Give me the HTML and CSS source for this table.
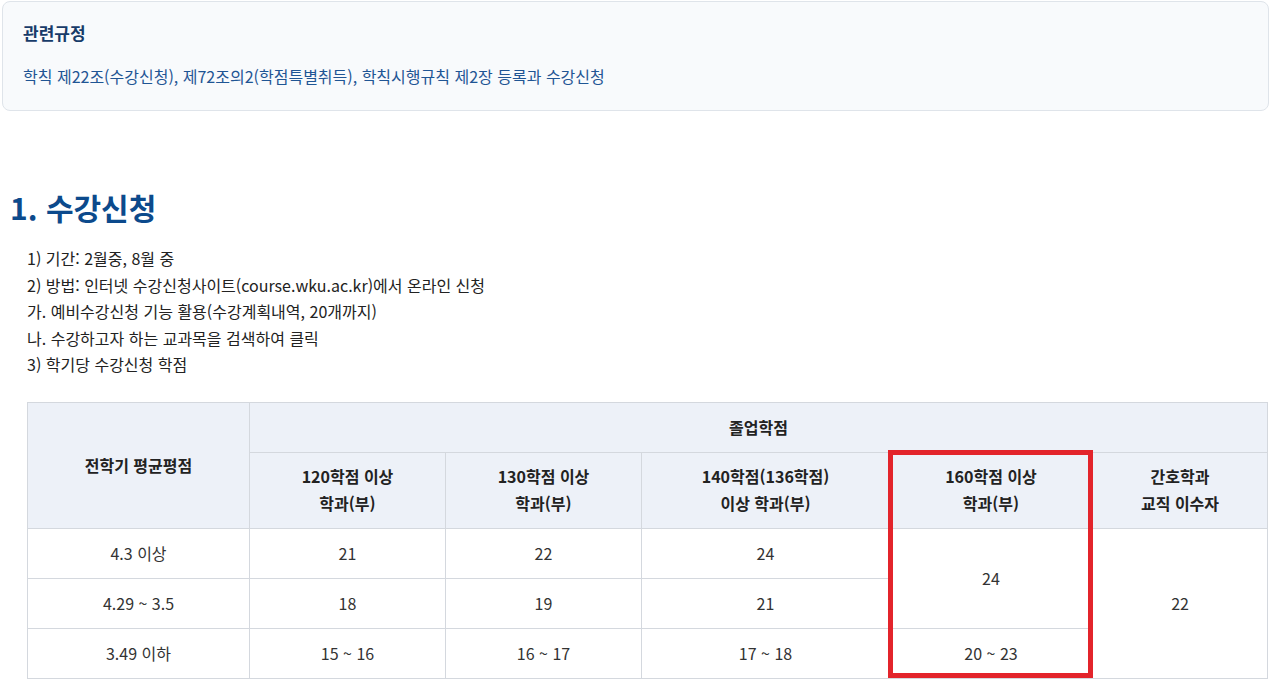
FILE: index.html
```html
<!DOCTYPE html>
<html lang="ko">
<head>
<meta charset="utf-8">
<title>수강신청</title>
<link rel="stylesheet" href="styles.css">
</head>
<body>
<div class="page">
  <section class="rule-box">
    <h3 class="rule-title">관련규정</h3>
    <p class="rule-text">학칙 제22조(수강신청), 제72조의2(학점특별취득), 학칙시행규칙 제2장 등록과 수강신청</p>
  </section>

  <h2 class="section-title">1. 수강신청</h2>

  <ul class="steps">
    <li>1) 기간: 2월중, 8월 중</li>
    <li>2) 방법: 인터넷 수강신청사이트(course.wku.ac.kr)에서 온라인 신청</li>
    <li>가. 예비수강신청 기능 활용(수강계획내역, 20개까지)</li>
    <li>나. 수강하고자 하는 교과목을 검색하여 클릭</li>
    <li>3) 학기당 수강신청 학점</li>
  </ul>

  <div class="table-wrap">
    <table class="credit-table">
      <colgroup>
        <col class="c1"><col class="c2"><col class="c3"><col class="c4"><col class="c5"><col class="c6">
      </colgroup>
      <thead>
        <tr class="h1">
          <th rowspan="2">전학기 평균평점</th>
          <th colspan="5">졸업학점</th>
        </tr>
        <tr class="h2">
          <th>120학점 이상<br>학과(부)</th>
          <th>130학점 이상<br>학과(부)</th>
          <th>140학점(136학점)<br>이상 학과(부)</th>
          <th>160학점 이상<br>학과(부)</th>
          <th>간호학과<br>교직 이수자</th>
        </tr>
      </thead>
      <tbody>
        <tr>
          <td>4.3 이상</td><td>21</td><td>22</td><td>24</td><td rowspan="2">24</td><td rowspan="3">22</td>
        </tr>
        <tr>
          <td>4.29 ~ 3.5</td><td>18</td><td>19</td><td>21</td>
        </tr>
        <tr>
          <td>3.49 이하</td><td>15 ~ 16</td><td>16 ~ 17</td><td>17 ~ 18</td><td>20 ~ 23</td>
        </tr>
      </tbody>
    </table>
    <div class="highlight"></div>
  </div>
</div>
</body>
</html>
```

FILE: styles.css
```css
* { box-sizing: border-box; }
html, body { margin: 0; padding: 0; background: #ffffff; }
body {
  font-family: "Noto Sans CJK KR", "Noto Sans", sans-serif;
  color: #222222;
}
.page {
  padding: 1px 1px 0 2px;
}
.rule-box {
  background: #f8fafc;
  border: 1px solid #dfe4ea;
  border-radius: 8px;
  padding: 19px 20px 20px 20px;
  height: 110px;
}
.rule-title {
  margin: 0;
  font-size: 17px;
  line-height: 24px;
  font-weight: 700;
  color: #173b69;
}
.rule-text {
  margin: 19px 0 0 0;
  font-size: 16px;
  line-height: 24px;
  color: #1f5594;
}
.section-title {
  margin: 76px 0 0 8px;
  font-size: 30px;
  line-height: 40px;
  font-weight: 700;
  color: #0c4a8c;
}
.steps {
  list-style: none;
  margin: 18px 0 0 25px;
  padding: 0;
  font-size: 16px;
  line-height: 26.5px;
  color: #222222;
}
.table-wrap {
  position: relative;
  margin: 24px 0 0 25px;
  width: 1240px;
}
.credit-table {
  width: 1240px;
  table-layout: fixed;
  border-collapse: collapse;
  font-size: 16px;
  text-align: center;
}
.c1 { width: 222px; }
.c2 { width: 196px; }
.c3 { width: 196px; }
.c4 { width: 248px; }
.c5 { width: 203px; }
.c6 { width: 175px; }
.credit-table th,
.credit-table td {
  border: 1px solid #d4d8de;
  padding: 0;
  vertical-align: middle;
}
.credit-table th {
  background: #edf1f8;
  font-weight: 700;
  color: #222222;
  line-height: 27px;
}
.credit-table td {
  color: #333333;
  height: 50px;
  line-height: 22px;
}
.h1 th { height: 50px; }
.h2 th { height: 76px; }
.highlight {
  position: absolute;
  left: 861px;
  top: 48px;
  width: 205px;
  height: 228px;
  border: 5px solid #e3242b;
  pointer-events: none;
}
```
